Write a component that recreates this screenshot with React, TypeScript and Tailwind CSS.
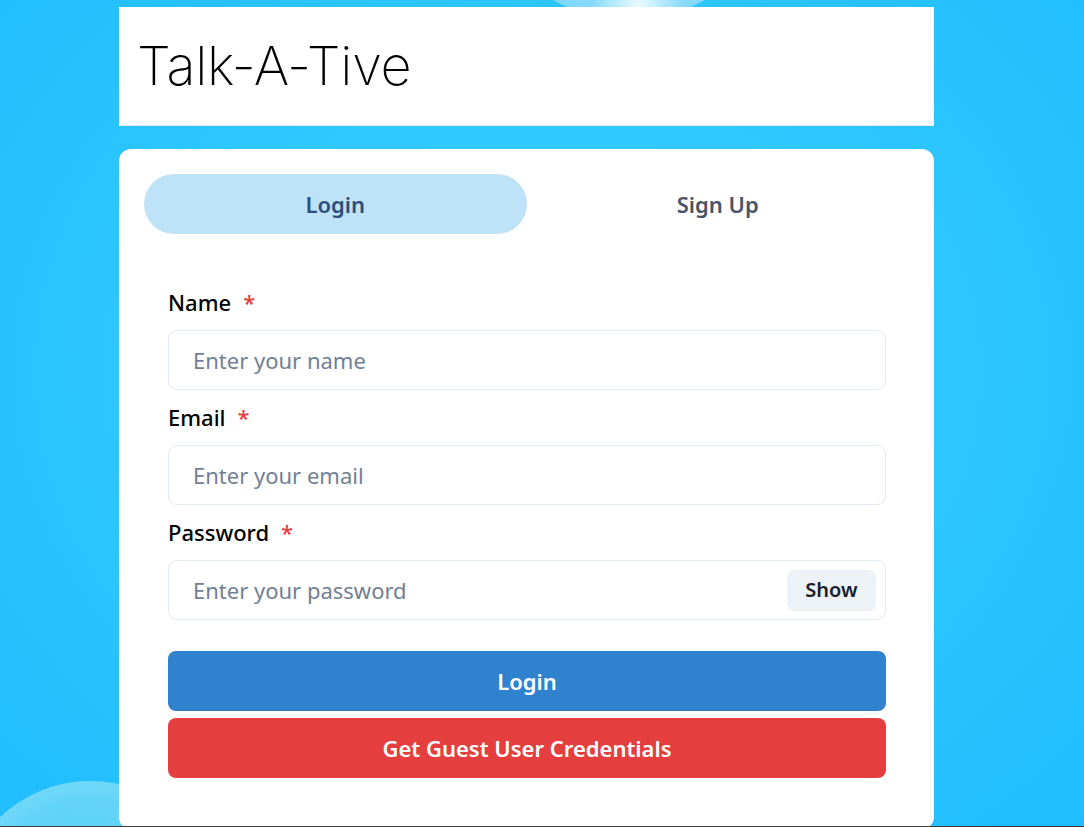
import React from "react";

const sans = { fontFamily: '"Noto Sans", "Open Sans", sans-serif' };

function Field({ label, placeholder, show }: { label: string; placeholder: string; show?: boolean }) {
  return (
    <div className="flex flex-col">
      <div className="h-[30px] flex items-center text-[22px] font-medium text-black leading-none">
        {label}
        <span className="ml-[12px] text-[#e53e3e]">*</span>
      </div>
      <div className="mt-[13px] h-[60px] rounded-[9px] border border-[#e2e8f0] flex items-center pl-[24px] pr-[9px]">
        <span className="flex-1 text-[22px] text-[#718096]">{placeholder}</span>
        {show && (
          <span className="h-[41px] w-[89px] rounded-[8px] bg-[#edf2f7] flex items-center justify-center text-[20px] font-semibold text-[#1a202c]">
            Show
          </span>
        )}
      </div>
    </div>
  );
}

export default function App() {
  return (
    <div
      className="relative w-[1084px] h-[827px] overflow-hidden bg-[radial-gradient(ellipse_at_50%_45%,#3ccdff_0%,#30c8ff_45%,#1fbdff_100%)]"
      style={sans}
    >
      {/* bubbles */}
      <div className="absolute left-[475px] top-[-288px] w-[308px] h-[308px] rounded-full bg-[radial-gradient(circle_at_53%_95%,#ffffff_0%,#e0f6ff_4%,#8fdcff_14%,#6fd3ff_55%,#5dcfff_100%)] opacity-90" />
      <div className="absolute left-[-40px] top-[781px] w-[260px] h-[260px] rounded-full bg-[radial-gradient(circle_at_50%_50%,#4fd0fb_0%,#62d4f7_60%,#8ee0fa_92%,#b4ebfb_100%)]" />

      <div className="relative ml-[119px] w-[815px] pt-[7px] flex flex-col">
        <div className="h-[119px] bg-white border-b border-[#e2e8f0] flex items-center px-[18px]">
          <span
            className="text-[54px] font-extralight text-black leading-none tracking-[-0.3px]"
            style={{ fontFamily: '"Inter", sans-serif' }}
          >
            Talk-A-Tive
          </span>
        </div>

        <div className="mt-[23px] h-[680px] bg-white rounded-[12px] p-[25px]">
          <div className="flex h-[60px]">
            <div className="flex-1 rounded-full bg-[#bee3f8] flex items-center justify-center text-[22px] font-semibold text-[#2c4f7c]">
              Login
            </div>
            <div className="flex-1 flex items-center justify-center text-[22px] font-semibold text-[#4a5568]">
              Sign Up
            </div>
          </div>

          <div className="pl-[24px] pr-[23px] pt-[53px] flex flex-col">
            <div className="flex flex-col gap-[12px]">
              <Field label="Name" placeholder="Enter your name" />
              <Field label="Email" placeholder="Enter your email" />
              <Field label="Password" placeholder="Enter your password" show />
            </div>
            <div className="mt-[31px] h-[60px] rounded-[8px] bg-[#3182ce] flex items-center justify-center text-white text-[22px] font-semibold">
              Login
            </div>
            <div className="mt-[7px] h-[60px] rounded-[8px] bg-[#e53e3e] flex items-center justify-center text-white text-[22px] font-semibold">
              Get Guest User Credentials
            </div>
          </div>
        </div>
      </div>

      <div className="absolute left-0 bottom-0 w-full h-[1px] bg-[#3c3c3c]" />
    </div>
  );
}
